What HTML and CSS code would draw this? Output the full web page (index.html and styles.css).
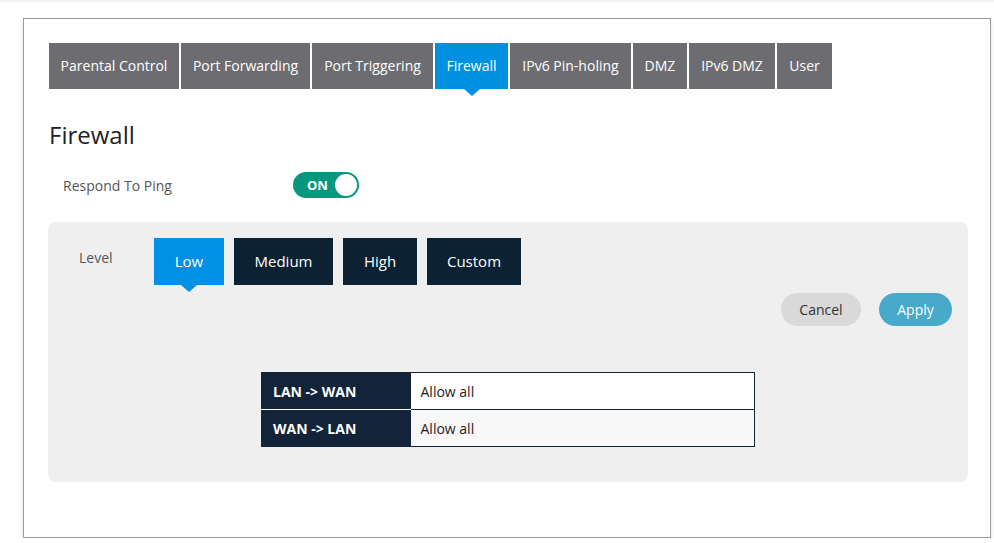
FILE: index.html
```html
<!DOCTYPE html>
<html>
<head>
<meta charset="utf-8">
<link rel="stylesheet" href="styles.css">
</head>
<body>
<div class="topstrip"></div>
<div class="panel">
  <nav class="tabs">
    <div class="tab">Parental Control</div>
    <div class="tab">Port Forwarding</div>
    <div class="tab">Port Triggering</div>
    <div class="tab active">Firewall</div>
    <div class="tab">IPv6 Pin-holing</div>
    <div class="tab">DMZ</div>
    <div class="tab">IPv6 DMZ</div>
    <div class="tab">User</div>
  </nav>
  <h1 class="title">Firewall</h1>
  <div class="ping-row">
    <span class="ping-label">Respond To Ping</span>
    <div class="toggle"><span class="toggle-text">ON</span><span class="knob"></span></div>
  </div>
  <div class="levelbox">
    <div class="level-row">
      <span class="level-label">Level</span>
      <div class="levels">
        <div class="lvl active">Low</div>
        <div class="lvl">Medium</div>
        <div class="lvl">High</div>
        <div class="lvl">Custom</div>
      </div>
    </div>
    <div class="actions">
      <button class="btn cancel">Cancel</button>
      <button class="btn apply">Apply</button>
    </div>
    <table class="rules">
      <tr><th>LAN -&gt; WAN</th><td>Allow all</td></tr>
      <tr class="alt"><th>WAN -&gt; LAN</th><td>Allow all</td></tr>
    </table>
  </div>
</div>
</body>
</html>
```
FILE: styles.css
```css
html, body {
  margin: 0;
  padding: 0;
  background: #ffffff;
  font-family: "Open Sans", "Noto Sans", sans-serif;
}
.topstrip {
  height: 2px;
  background: #f3f3f3;
}
.panel {
  margin: 16px 0 0 23px;
  width: 968px;
  height: 520px;
  box-sizing: border-box;
  border: 1px solid #9a9a9a;
  box-shadow: 0 3px 5px rgba(0,0,0,0.12);
  padding: 24px 0 0 25px;
}
.tabs {
  display: flex;
  gap: 2px;
}
.tab {
  position: relative;
  flex: none;
  height: 46px;
  line-height: 46px;
  text-align: center;
  white-space: nowrap;
  background: #6d6c70;
  color: #ffffff;
  font-size: 14px;
}
.tab:nth-child(1) { width: 130px; }
.tab:nth-child(2) { width: 129px; }
.tab:nth-child(3) { width: 121px; }
.tab:nth-child(4) { width: 73px; }
.tab:nth-child(5) { width: 121px; }
.tab:nth-child(6) { width: 54px; }
.tab:nth-child(7) { width: 86px; }
.tab:nth-child(8) { width: 55px; }
.tab.active {
  background: #0090e0;
}
.tab.active::after,
.lvl.active::after {
  content: "";
  position: absolute;
  left: 50%;
  bottom: -7px;
  margin-left: -8px;
  border-left: 8px solid transparent;
  border-right: 8px solid transparent;
  border-top: 7px solid #0090e0;
}
.title {
  margin: 31px 0 0 0;
  font-size: 24px;
  font-weight: 400;
  color: #222222;
  line-height: 30px;
}
.ping-row {
  display: flex;
  align-items: center;
  margin-top: 22px;
  padding-left: 14px;
}
.ping-label {
  width: 230px;
  font-size: 14px;
  color: #555555;
}
.toggle {
  width: 66px;
  height: 26px;
  box-sizing: border-box;
  border-radius: 13px;
  background: #07977f;
  display: flex;
  align-items: center;
  justify-content: space-between;
  padding: 0 2px 0 14px;
}
.toggle-text {
  color: #ffffff;
  font-weight: 700;
  font-size: 13px;
}
.knob {
  width: 22px;
  height: 22px;
  border-radius: 50%;
  background: #ffffff;
}
.levelbox {
  margin-top: 24px;
  margin-left: -1px;
  width: 920px;
  height: 260px;
  box-sizing: border-box;
  background: #efefef;
  border-radius: 8px;
  padding: 16px 16px 0 31px;
}
.level-row {
  display: flex;
  align-items: flex-start;
}
.level-label {
  width: 75px;
  padding-top: 10px;
  font-size: 14px;
  color: #555555;
}
.levels {
  display: flex;
  gap: 10px;
}
.lvl {
  position: relative;
  height: 47px;
  line-height: 47px;
  padding: 0;
  text-align: center;
  background: #0c2233;
  color: #ffffff;
  font-size: 15px;
}
.lvl:nth-child(1) { width: 70px; }
.lvl:nth-child(2) { width: 99px; }
.lvl:nth-child(3) { width: 74px; }
.lvl:nth-child(4) { width: 94px; }
.lvl.active {
  background: #0090e6;
}
.lvl.active::after {
  border-top-color: #0090e6;
}
.actions {
  display: flex;
  justify-content: flex-end;
  gap: 18px;
  margin-top: 8px;
}
.btn {
  height: 33px;
  border: none;
  border-radius: 17px;
  font-family: "Open Sans", "Noto Sans", sans-serif;
  font-size: 14px;
  padding: 0;
}
.cancel {
  width: 80px;
  background: #d9d9d9;
  color: #333333;
}
.apply {
  width: 73px;
  background: #48a9cb;
  color: #ffffff;
}
.rules {
  margin: 46px 0 0 182px;
  width: 494px;
  border-collapse: collapse;
  border: 1px solid #12233a;
  font-size: 14px;
}
.rules th {
  width: 149px;
  height: 37px;
  box-sizing: border-box;
  background: #12233a;
  color: #ffffff;
  font-weight: 700;
  text-align: left;
  padding: 0 0 0 11px;
  border-bottom: 1px solid #ffffff;
}
.rules tr:last-child th {
  border-bottom: none;
}
.rules td {
  background: #ffffff;
  color: #222222;
  padding: 0 0 0 10px;
  border-bottom: 1px solid #12233a;
}
.rules tr.alt td {
  background: #f8f8f8;
}
```
